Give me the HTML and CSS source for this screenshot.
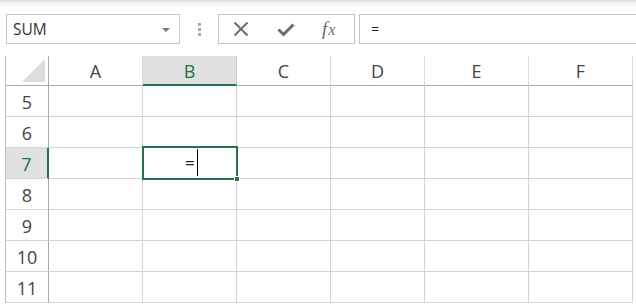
FILE: index.html
```html
<!DOCTYPE html>
<html>
<head>
<meta charset="utf-8">
<link rel="stylesheet" href="styles.css">
</head>
<body>
<div class="topshade"></div>
<div class="fbar">
  <div class="namebox"><span class="nametext">SUM</span><span class="dd"></span></div>
  <div class="dots"><i></i><i></i><i></i></div>
  <div class="btns">
    <svg class="ico" width="20" height="20" viewBox="0 0 20 20"><path d="M3.5 3.5 L16.5 16.5 M16.5 3.5 L3.5 16.5" stroke="#6b6b6b" stroke-width="1.8" fill="none"/></svg>
    <svg class="ico" width="20" height="20" viewBox="0 0 20 20"><path d="M2.5 10.5 L7.5 15.5 L17.5 5.5" stroke="#6b6b6b" stroke-width="3" fill="none"/></svg>
    <span class="fx"><i>f</i><i class="x">x</i></span>
  </div>
  <div class="finput">=</div>
</div>
<div class="sheet">
  <div class="grid">
    <div class="corner"><span class="tri"></span></div>
    <div class="ch">A</div>
    <div class="ch sel">B</div>
    <div class="ch">C</div>
    <div class="ch">D</div>
    <div class="ch">E</div>
    <div class="ch">F</div>

    <div class="rh">5</div><div class="c"></div><div class="c"></div><div class="c"></div><div class="c"></div><div class="c"></div><div class="c"></div>
    <div class="rh">6</div><div class="c"></div><div class="c"></div><div class="c"></div><div class="c"></div><div class="c"></div><div class="c"></div>
    <div class="rh sel">7</div><div class="c"></div><div class="c active"><span class="eq">=</span><span class="caret"></span><span class="handle"></span></div><div class="c"></div><div class="c"></div><div class="c"></div><div class="c"></div>
    <div class="rh">8</div><div class="c"></div><div class="c"></div><div class="c"></div><div class="c"></div><div class="c"></div><div class="c"></div>
    <div class="rh">9</div><div class="c"></div><div class="c"></div><div class="c"></div><div class="c"></div><div class="c"></div><div class="c"></div>
    <div class="rh">10</div><div class="c"></div><div class="c"></div><div class="c"></div><div class="c"></div><div class="c"></div><div class="c"></div>
    <div class="rh">11</div><div class="c"></div><div class="c"></div><div class="c"></div><div class="c"></div><div class="c"></div><div class="c"></div>
  </div>
</div>
</body>
</html>
```

FILE: styles.css
```css
* { box-sizing: border-box; }
html, body { margin: 0; padding: 0; }
body {
  width: 636px;
  height: 304px;
  overflow: hidden;
  background: #fff;
  font-family: "Open Sans", "Noto Sans", sans-serif;
  color: #444;
}
.topshade {
  height: 7px;
  background: linear-gradient(#d9d9d9 0, #ededed 2px, #fff 7px);
}
.fbar {
  display: flex;
  align-items: stretch;
  height: 30px;
  margin-top: 7px;
  padding-left: 6px;
}
.namebox {
  width: 174px;
  border: 1px solid #c6c6c6;
  background: #fff;
  display: flex;
  align-items: center;
  justify-content: space-between;
  padding: 0 9px 0 6px;
}
.nametext { font-size: 15.5px; color: #333; }
.dd {
  width: 0; height: 0;
  border-left: 4px solid transparent;
  border-right: 4px solid transparent;
  border-top: 4px solid #777;
  margin-top: 1px;
}
.dots {
  width: 38px;
  display: flex;
  flex-direction: column;
  align-items: center;
  justify-content: center;
  gap: 2px;
}
.dots i {
  display: block;
  width: 3px; height: 3px;
  background: #a8a8a8;
}
.btns {
  width: 137px;
  border: 1px solid #c6c6c6;
  display: flex;
  align-items: center;
  justify-content: flex-start;
  gap: 25px;
  padding-left: 12px;
}
.ico { display: block; }
.fx {
  font-family: "Liberation Serif", "DejaVu Serif", serif;
  font-size: 19px;
  color: #6b6b6b;
  margin-left: 1px;
}
.fx .x { font-size: 16px; margin-left: 1px; }
.finput {
  flex: 1;
  margin-left: 4px;
  border: 1px solid #c6c6c6;
  border-right: none;
  font-size: 14px;
  color: #222;
  padding-left: 11px;
  line-height: 27px;
}
.sheet {
  margin-top: 12px;
  padding-left: 5px;
}
.grid {
  display: grid;
  grid-template-columns: 43px 94px 94px 94px 94px 104px 104px;
  grid-template-rows: 30px repeat(7, 31px);
  border-left: 1px solid #bdbdbd;
}
.corner {
  border-right: 1px solid #ababab;
  border-bottom: 1px solid #ababab;
  position: relative;
}
.tri {
  position: absolute;
  right: 3px;
  bottom: 3px;
  width: 0; height: 0;
  border-left: 23px solid transparent;
  border-bottom: 23px solid #dcdcdc;
}
.ch {
  border-right: 1px solid #d9d9d9;
  border-bottom: 1px solid #ababab;
  display: flex;
  align-items: center;
  justify-content: center;
  font-size: 18px;
  padding-top: 1px;
}
.ch.sel {
  background: #e1e1e1;
  color: #217346;
  border-bottom: 2px solid #217346;
  border-right-color: #c6c6c6;
}
.rh {
  border-right: 1px solid #ababab;
  border-bottom: 1px solid #d4d4d4;
  display: flex;
  align-items: center;
  justify-content: center;
  font-size: 18px;
  padding-top: 1px;
}
.rh.sel {
  background: #e1e1e1;
  color: #217346;
  border-right: 2px solid #217346;
}
.c {
  border-right: 1px solid #d4d4d4;
  border-bottom: 1px solid #d4d4d4;
}
.c.active {
  position: relative;
}
.c.active::before {
  content: "";
  position: absolute;
  left: -1px; top: -2px; right: -2px; bottom: -2px;
  border: 2px solid #217346;
}
.eq {
  position: absolute;
  left: 42px;
  top: 3px;
  font-size: 17px;
  color: #222;
}
.caret {
  position: absolute;
  left: 54px;
  top: 1px;
  width: 1px;
  height: 27px;
  background: #000;
}
.handle {
  position: absolute;
  right: -4px;
  bottom: -4px;
  width: 6px;
  height: 6px;
  background: #217346;
  border: 1px solid #fff;
}
```
